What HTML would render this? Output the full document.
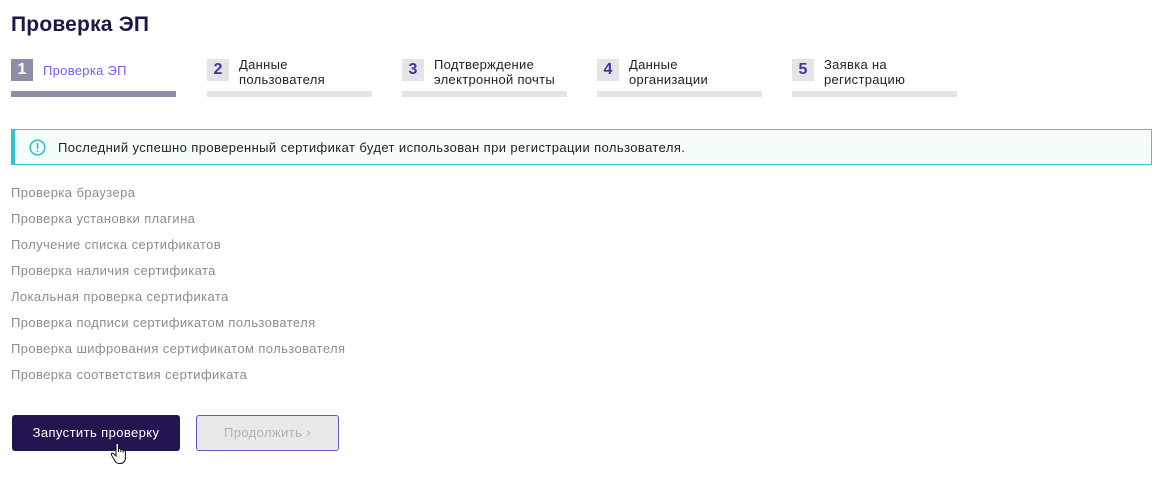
<!DOCTYPE html>
<html><head><meta charset="utf-8"><style>
body{margin:0;width:1163px;height:478px;background:#fff;font-family:"Liberation Sans","DejaVu Sans",sans-serif;position:relative;overflow:hidden}
.t{position:absolute;left:11px;top:13px;font-size:21px;font-weight:bold;color:#201544;margin:0;letter-spacing:0.2px}
.step{position:absolute;top:59px;width:165px}
.num{position:absolute;left:0;top:0;width:22px;height:22px;background:#e4e4e8;color:#4b2f9f;font-weight:bold;font-size:16px;text-align:center;line-height:22px}
.lab{position:absolute;left:32px;top:-2px;font-size:13px;line-height:15px;color:#222;white-space:nowrap;letter-spacing:0.3px}
.bar{position:absolute;left:0;top:32px;width:165px;height:6px;background:#e4e4e8}
.alert{position:absolute;left:11px;top:129px;width:1136px;height:34px;background:#f4fcfc;border:1px solid #3ac8cf;border-left:4px solid #2ec4cc}
.alert span{position:absolute;left:43px;top:10px;font-size:13px;color:#222;letter-spacing:0.4px}
.li{position:absolute;left:11px;font-size:13px;color:#8b8b96;letter-spacing:0.4px}
.b1{position:absolute;left:12px;top:415px;width:168px;height:36px;background:#231650;border-radius:3px;color:#fff;font-size:13px;text-align:center;line-height:36px;letter-spacing:0.4px}
.b2{position:absolute;left:196px;top:415px;width:141px;height:34px;background:#e8e9eb;border:1px solid #6c4fc6;border-radius:3px;color:#b2b2b6;font-size:13px;text-align:center;line-height:34px;letter-spacing:0.4px}
</style></head><body>
<h1 class="t">Проверка ЭП</h1>
<div class="step" style="left:11px"><div class="num" style="background:#8c8fa6;color:#fff">1</div><div class="lab" style="top:4px;color:#7b5cf0">Проверка ЭП</div><div class="bar" style="background:#8c8fa6"></div></div>
<div class="step" style="left:207px"><div class="num">2</div><div class="lab">Данные<br>пользователя</div><div class="bar"></div></div>
<div class="step" style="left:402px"><div class="num">3</div><div class="lab">Подтверждение<br>электронной почты</div><div class="bar"></div></div>
<div class="step" style="left:597px"><div class="num">4</div><div class="lab">Данные<br>организации</div><div class="bar"></div></div>
<div class="step" style="left:792px"><div class="num">5</div><div class="lab">Заявка на<br>регистрацию</div><div class="bar"></div></div>
<div class="alert"><svg style="position:absolute;left:14px;top:9px" width="17" height="17" viewBox="0 0 17 17"><circle cx="8.5" cy="8.5" r="7.3" fill="none" stroke="#2ec4cc" stroke-width="1.6"/><rect x="7.7" y="4" width="1.6" height="6" fill="#2ec4cc"/><rect x="7.7" y="11.3" width="1.6" height="1.7" fill="#2ec4cc"/></svg><span>Последний успешно проверенный сертификат будет использован при регистрации пользователя.</span></div>
<div class="li" style="top:185px">Проверка браузера</div>
<div class="li" style="top:211px">Проверка установки плагина</div>
<div class="li" style="top:237px">Получение списка сертификатов</div>
<div class="li" style="top:263px">Проверка наличия сертификата</div>
<div class="li" style="top:289px">Локальная проверка сертификата</div>
<div class="li" style="top:315px">Проверка подписи сертификатом пользователя</div>
<div class="li" style="top:341px">Проверка шифрования сертификатом пользователя</div>
<div class="li" style="top:367px">Проверка соответствия сертификата</div>
<div class="b1">Запустить проверку</div>
<div class="b2">Продолжить &#x203A;</div>
<svg style="position:absolute;left:110px;top:442px" width="22" height="24" viewBox="0 0 22 24"><path d="M6 2.5c0-1.5 2.5-1.5 2.5 0V10l0-2.5c0-1.4 2.3-1.4 2.3 0V10v-1.5c0-1.4 2.300-1.4 2.3 0V10.5v-1c0-1.4 2.3-1.4 2.3 0V16c0 3-2 5.5-5 5.5H9c-2 0-3-1-4-2.5L1.5 13c-.8-1.3 1-2.5 2-1.4L6 14z" fill="#fff" stroke="#111" stroke-width="1"/></svg>
</body></html>
